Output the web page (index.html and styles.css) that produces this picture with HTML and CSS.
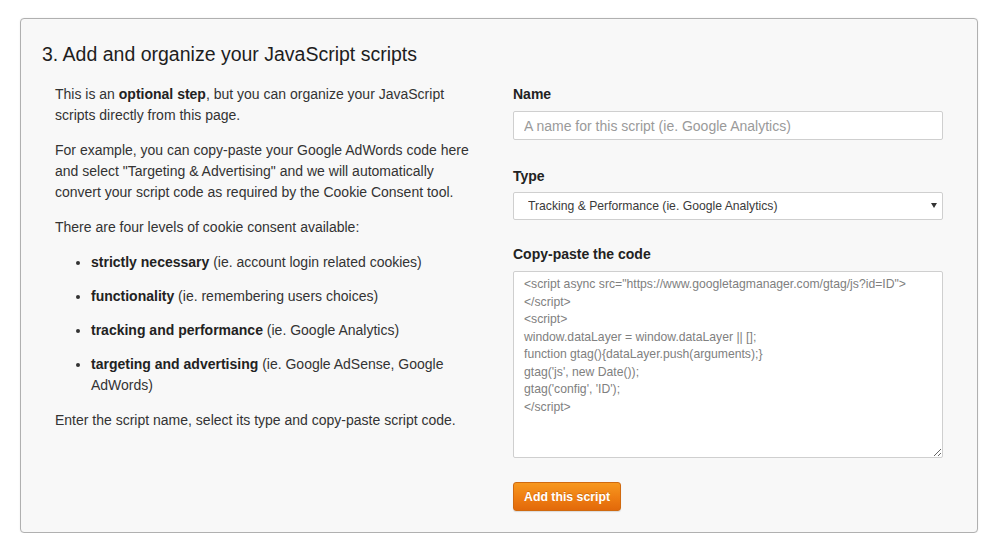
FILE: index.html
```html
<!DOCTYPE html>
<html lang="en">
<head>
<meta charset="utf-8">
<title>Add and organize your JavaScript scripts</title>
<link rel="stylesheet" href="styles.css">
</head>
<body>
<section class="card">
  <h2 class="title">3. Add and organize your JavaScript scripts</h2>
  <div class="row">
    <div class="info">
      <p>This is an <b>optional step</b>, but you can organize your JavaScript scripts directly from this page.</p>
      <p>For example, you can copy-paste your Google AdWords code here and select "Targeting &amp; Advertising" and we will automatically convert your script code as required by the Cookie Consent tool.</p>
      <p>There are four levels of cookie consent available:</p>
      <ul class="levels">
        <li><b>strictly necessary</b> (ie. account login related cookies)</li>
        <li><b>functionality</b> (ie. remembering users choices)</li>
        <li><b>tracking and performance</b> (ie. Google Analytics)</li>
        <li><b>targeting and advertising</b> (ie. Google AdSense, Google AdWords)</li>
      </ul>
      <p>Enter the script name, select its type and copy-paste script code.</p>
    </div>
    <form class="form">
      <label class="label" for="name">Name</label>
      <input class="input" id="name" type="text" placeholder="A name for this script (ie. Google Analytics)">
      <label class="label label-type" for="type">Type</label>
      <div class="select-wrap">
        <select class="select" id="type">
          <option>Tracking &amp; Performance (ie. Google Analytics)</option>
        </select>
      </div>
      <label class="label" for="code">Copy-paste the code</label>
      <textarea class="code" id="code"><script async src="https://www.googletagmanager.com/gtag/js?id=ID">
</script>
<script>
window.dataLayer = window.dataLayer || [];
function gtag(){dataLayer.push(arguments);}
gtag('js', new Date());
gtag('config', 'ID');
</script></textarea>
      <div class="actions">
        <button class="btn" type="button">Add this script</button>
      </div>
    </form>
  </div>
</section>
</body>
</html>
```

FILE: styles.css
```css
html, body {
  margin: 0;
  padding: 0;
  background: #ffffff;
}

body {
  font-family: "Liberation Sans", Arial, Helvetica, sans-serif;
  color: #333333;
}

.card {
  margin: 18px 22px 0 20px;
  box-sizing: border-box;
  height: 515px;
  border: 1px solid #b0b0b0;
  border-radius: 4px;
  background: #f8f8f8;
  box-shadow: 0 0 2px rgba(0, 0, 0, 0.08);
  padding: 24px 21px 22px 21px;
}

.title {
  margin: 0 0 19px 0;
  font-size: 19.5px;
  line-height: 22px;
  font-weight: normal;
  color: #1e1e1e;
}

.row {
  display: flex;
  gap: 33px;
  align-items: flex-start;
}

.info {
  width: 438px;
  box-sizing: border-box;
  padding-left: 13px;
  font-size: 14px;
  line-height: 21px;
}

.info p {
  margin: 0 0 14px 0;
}

.levels {
  margin: 0 0 14px 0;
  padding-left: 36px;
}

.levels li {
  margin-bottom: 13px;
}

.info b {
  color: #222;
}

.form {
  width: 430px;
  display: flex;
  flex-direction: column;
  margin: 0;
}

.label {
  display: block;
  font-size: 14px;
  line-height: 21px;
  font-weight: bold;
  color: #222222;
  margin-bottom: 6px;
}

.label-type {
  margin-bottom: 5px;
}

.input {
  box-sizing: border-box;
  width: 100%;
  height: 29px;
  margin: 0 0 26px 0;
  padding: 0 10px;
  border: 1px solid #cfcfcf;
  border-radius: 2px;
  background: #ffffff;
  font-family: inherit;
  font-size: 14px;
  color: #333;
  outline: none;
}

.input::placeholder {
  color: #9a9a9a;
}

.select-wrap {
  position: relative;
  margin-bottom: 24px;
}

.select {
  box-sizing: border-box;
  width: 100%;
  height: 28px;
  margin: 0;
  padding: 0 14px;
  border: 1px solid #cfcfcf;
  border-radius: 2px;
  background: #ffffff;
  font-family: inherit;
  font-size: 12.2px;
  color: #3a3a3a;
  appearance: none;
  -webkit-appearance: none;
  outline: none;
}

.select-wrap::after {
  content: "";
  position: absolute;
  right: 6px;
  top: 11px;
  width: 0;
  height: 0;
  border-left: 3px solid transparent;
  border-right: 3px solid transparent;
  border-top: 5px solid #333333;
  pointer-events: none;
}

.code {
  box-sizing: border-box;
  width: 100%;
  height: 187px;
  margin: 0 0 24px 0;
  padding: 4px 10px;
  border: 1px solid #cfcfcf;
  border-radius: 2px;
  background: #ffffff;
  font-family: inherit;
  font-size: 12.2px;
  line-height: 17.5px;
  color: #808080;
  outline: none;
  white-space: pre;
  overflow: hidden;
}

.actions {
  display: flex;
}

.btn {
  box-sizing: border-box;
  height: 29px;
  padding: 0 10px;
  border: 1px solid #d06a10;
  border-radius: 3px;
  background: linear-gradient(to bottom, #f7981f 0%, #ee7d12 55%, #e2690a 100%);
  color: #ffffff;
  font-family: inherit;
  font-size: 12.3px;
  font-weight: bold;
  text-shadow: 0 -1px 0 rgba(140, 60, 0, 0.35);
  box-shadow: 0 1px 1px rgba(0, 0, 0, 0.12);
  cursor: pointer;
}
```
